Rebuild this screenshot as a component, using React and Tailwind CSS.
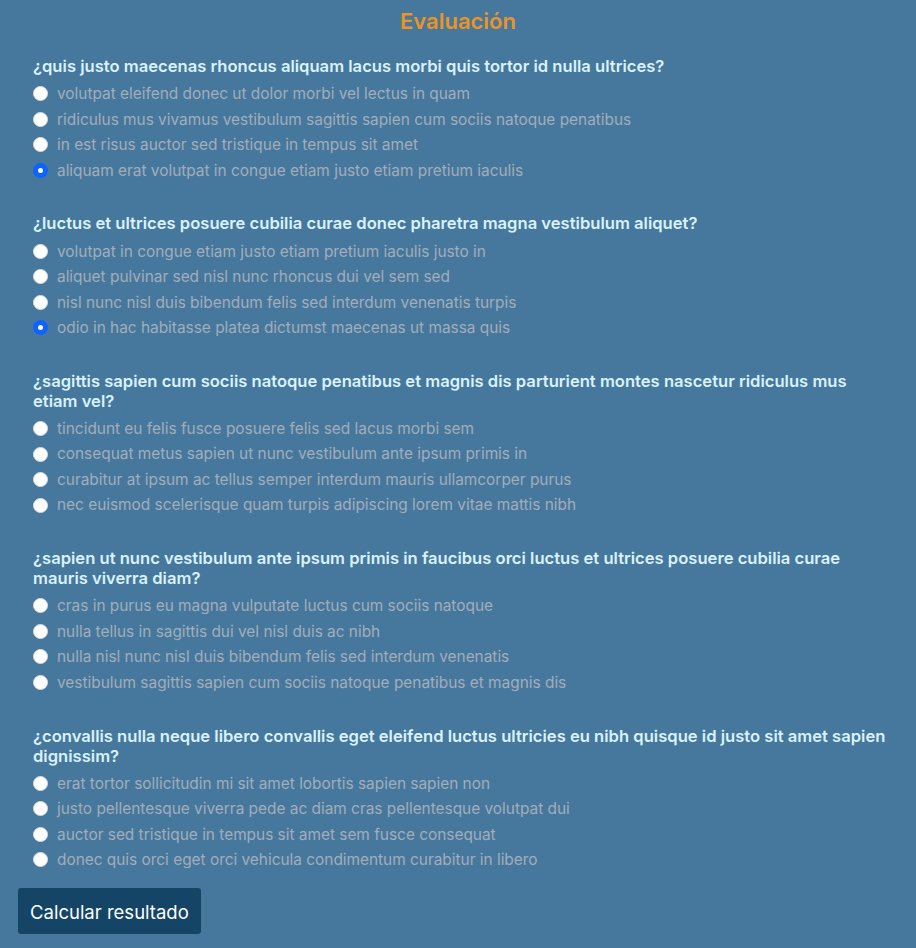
import { useState } from 'react';

const preguntas = [
  {
    texto: '¿quis justo maecenas rhoncus aliquam lacus morbi quis tortor id nulla ultrices?',
    opciones: [
      'volutpat eleifend donec ut dolor morbi vel lectus in quam',
      'ridiculus mus vivamus vestibulum sagittis sapien cum sociis natoque penatibus',
      'in est risus auctor sed tristique in tempus sit amet',
      'aliquam erat volutpat in congue etiam justo etiam pretium iaculis',
    ],
    elegida: 3,
  },
  {
    texto: '¿luctus et ultrices posuere cubilia curae donec pharetra magna vestibulum aliquet?',
    opciones: [
      'volutpat in congue etiam justo etiam pretium iaculis justo in',
      'aliquet pulvinar sed nisl nunc rhoncus dui vel sem sed',
      'nisl nunc nisl duis bibendum felis sed interdum venenatis turpis',
      'odio in hac habitasse platea dictumst maecenas ut massa quis',
    ],
    elegida: 3,
  },
  {
    texto: '¿sagittis sapien cum sociis natoque penatibus et magnis dis parturient montes nascetur ridiculus mus etiam vel?',
    opciones: [
      'tincidunt eu felis fusce posuere felis sed lacus morbi sem',
      'consequat metus sapien ut nunc vestibulum ante ipsum primis in',
      'curabitur at ipsum ac tellus semper interdum mauris ullamcorper purus',
      'nec euismod scelerisque quam turpis adipiscing lorem vitae mattis nibh',
    ],
    elegida: null,
  },
  {
    texto: '¿sapien ut nunc vestibulum ante ipsum primis in faucibus orci luctus et ultrices posuere cubilia curae mauris viverra diam?',
    opciones: [
      'cras in purus eu magna vulputate luctus cum sociis natoque',
      'nulla tellus in sagittis dui vel nisl duis ac nibh',
      'nulla nisl nunc nisl duis bibendum felis sed interdum venenatis',
      'vestibulum sagittis sapien cum sociis natoque penatibus et magnis dis',
    ],
    elegida: null,
  },
  {
    texto: '¿convallis nulla neque libero convallis eget eleifend luctus ultricies eu nibh quisque id justo sit amet sapien dignissim?',
    opciones: [
      'erat tortor sollicitudin mi sit amet lobortis sapien sapien non',
      'justo pellentesque viverra pede ac diam cras pellentesque volutpat dui',
      'auctor sed tristique in tempus sit amet sem fusce consequat',
      'donec quis orci eget orci vehicula condimentum curabitur in libero',
    ],
    elegida: null,
  },
];

function Radio({ checked }) {
  if (checked) {
    return <span className="w-[15px] h-[15px] rounded-full bg-white border-[5px] border-[#0c63ff] shrink-0"></span>;
  }
  return <span className="w-[15px] h-[15px] rounded-full bg-white border border-[#dcdcdc] shrink-0"></span>;
}

export default function App() {
  const [respuestas, setRespuestas] = useState(preguntas.map((p) => p.elegida));

  return (
    <div className="min-h-[948px] bg-[#46789d] px-[18px] pt-[6px] pb-[14px] font-['Inter',sans-serif]">
      <h1 className="text-center text-[22px] leading-[30px] font-semibold text-[#ea9424]">Evaluación</h1>

      <div className="mt-[20px] pl-[15px] pr-[10px]">
        {preguntas.map((p, i) => (
          <div key={i} className="mb-[30.4px]">
            <p className="text-[16.6px] leading-[20px] font-semibold text-[#d9f2fb]">{p.texto}</p>
            <div className="mt-[5px]">
              {p.opciones.map((op, j) => (
                <label
                  key={j}
                  className="flex items-center gap-[9px] h-[25.5px] cursor-pointer"
                  onClick={() => setRespuestas(respuestas.map((r, k) => (k === i ? j : r)))}
                >
                  <Radio checked={respuestas[i] === j} />
                  <span className="text-[15.4px] text-[#a3adb9]">{op}</span>
                </label>
              ))}
            </div>
          </div>
        ))}
      </div>

      <button className="block -mt-[15px] h-[46px] px-[12px] rounded-[3px] bg-[#144566] text-white text-[18.5px] leading-[28px] pt-[2px]">
        Calcular resultado
      </button>
    </div>
  );
}
